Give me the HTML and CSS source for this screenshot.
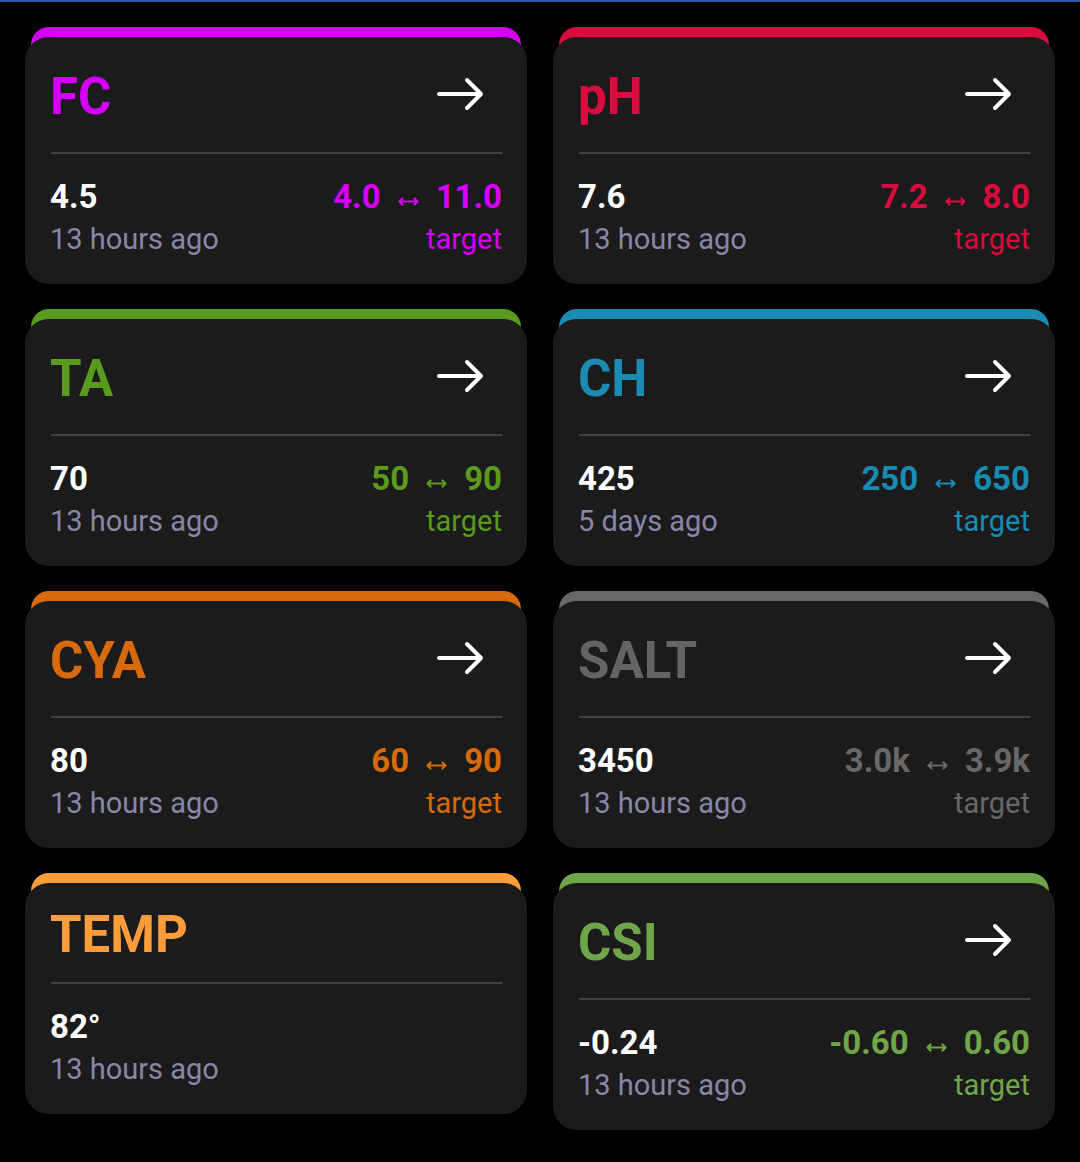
FILE: index.html
```html
<!DOCTYPE html>
<html>
<head>
<meta charset="utf-8">
<link rel="stylesheet" href="styles.css">
</head>
<body>
<div class="topline"></div>
<main class="grid">

  <section class="card c-fc">
    <div class="head"><h2 class="title">FC</h2><svg class="go" viewBox="0 0 50 34"><path d="M4 17H46M32 3L46 17L32 31"/></svg></div>
    <div class="rule"></div>
    <div class="stats">
      <div class="left"><div class="val">4.5</div><div class="when">13 hours ago</div></div>
      <div class="right"><div class="range"><span>4.0</span><svg class="lr" viewBox="0 0 21 9"><path d="M1.5 4.5H19.5M4.5 1.5L1.5 4.5L4.5 7.5M16.5 1.5L19.5 4.5L16.5 7.5"/></svg><span>11.0</span></div><div class="tgt">target</div></div>
    </div>
  </section>

  <section class="card c-ph">
    <div class="head"><h2 class="title">pH</h2><svg class="go" viewBox="0 0 50 34"><path d="M4 17H46M32 3L46 17L32 31"/></svg></div>
    <div class="rule"></div>
    <div class="stats">
      <div class="left"><div class="val">7.6</div><div class="when">13 hours ago</div></div>
      <div class="right"><div class="range"><span>7.2</span><svg class="lr" viewBox="0 0 21 9"><path d="M1.5 4.5H19.5M4.5 1.5L1.5 4.5L4.5 7.5M16.5 1.5L19.5 4.5L16.5 7.5"/></svg><span>8.0</span></div><div class="tgt">target</div></div>
    </div>
  </section>

  <section class="card c-ta">
    <div class="head"><h2 class="title">TA</h2><svg class="go" viewBox="0 0 50 34"><path d="M4 17H46M32 3L46 17L32 31"/></svg></div>
    <div class="rule"></div>
    <div class="stats">
      <div class="left"><div class="val">70</div><div class="when">13 hours ago</div></div>
      <div class="right"><div class="range"><span>50</span><svg class="lr" viewBox="0 0 21 9"><path d="M1.5 4.5H19.5M4.5 1.5L1.5 4.5L4.5 7.5M16.5 1.5L19.5 4.5L16.5 7.5"/></svg><span>90</span></div><div class="tgt">target</div></div>
    </div>
  </section>

  <section class="card c-ch">
    <div class="head"><h2 class="title">CH</h2><svg class="go" viewBox="0 0 50 34"><path d="M4 17H46M32 3L46 17L32 31"/></svg></div>
    <div class="rule"></div>
    <div class="stats">
      <div class="left"><div class="val">425</div><div class="when">5 days ago</div></div>
      <div class="right"><div class="range"><span>250</span><svg class="lr" viewBox="0 0 21 9"><path d="M1.5 4.5H19.5M4.5 1.5L1.5 4.5L4.5 7.5M16.5 1.5L19.5 4.5L16.5 7.5"/></svg><span>650</span></div><div class="tgt">target</div></div>
    </div>
  </section>

  <section class="card c-cya">
    <div class="head"><h2 class="title">CYA</h2><svg class="go" viewBox="0 0 50 34"><path d="M4 17H46M32 3L46 17L32 31"/></svg></div>
    <div class="rule"></div>
    <div class="stats">
      <div class="left"><div class="val">80</div><div class="when">13 hours ago</div></div>
      <div class="right"><div class="range"><span>60</span><svg class="lr" viewBox="0 0 21 9"><path d="M1.5 4.5H19.5M4.5 1.5L1.5 4.5L4.5 7.5M16.5 1.5L19.5 4.5L16.5 7.5"/></svg><span>90</span></div><div class="tgt">target</div></div>
    </div>
  </section>

  <section class="card c-salt">
    <div class="head"><h2 class="title">SALT</h2><svg class="go" viewBox="0 0 50 34"><path d="M4 17H46M32 3L46 17L32 31"/></svg></div>
    <div class="rule"></div>
    <div class="stats">
      <div class="left"><div class="val">3450</div><div class="when">13 hours ago</div></div>
      <div class="right"><div class="range"><span>3.0k</span><svg class="lr" viewBox="0 0 21 9"><path d="M1.5 4.5H19.5M4.5 1.5L1.5 4.5L4.5 7.5M16.5 1.5L19.5 4.5L16.5 7.5"/></svg><span>3.9k</span></div><div class="tgt">target</div></div>
    </div>
  </section>

  <section class="card c-temp">
    <div class="head"><h2 class="title">TEMP</h2></div>
    <div class="rule"></div>
    <div class="stats">
      <div class="left"><div class="val">82°</div><div class="when">13 hours ago</div></div>
    </div>
  </section>

  <section class="card c-csi">
    <div class="head"><h2 class="title">CSI</h2><svg class="go" viewBox="0 0 50 34"><path d="M4 17H46M32 3L46 17L32 31"/></svg></div>
    <div class="rule"></div>
    <div class="stats">
      <div class="left"><div class="val">-0.24</div><div class="when">13 hours ago</div></div>
      <div class="right"><div class="range"><span>-0.60</span><svg class="lr" viewBox="0 0 21 9"><path d="M1.5 4.5H19.5M4.5 1.5L1.5 4.5L4.5 7.5M16.5 1.5L19.5 4.5L16.5 7.5"/></svg><span>0.60</span></div><div class="tgt">target</div></div>
    </div>
  </section>

</main>
</body>
</html>
```

FILE: styles.css
```css
* { box-sizing: border-box; }

html, body {
  margin: 0;
  padding: 0;
  background: #000;
}

body {
  width: 1080px;
  height: 1162px;
  overflow: hidden;
  font-family: Roboto, "Liberation Sans", sans-serif;
  color: #fff;
}

.topline {
  height: 2px;
  background: #2b5a9c;
}

.grid {
  display: grid;
  grid-template-columns: 502px 502px;
  column-gap: 26px;
  row-gap: 35px;
  padding: 35px 25px 0 25px;
  align-items: start;
}

.card {
  --accent: #fff;
  background: #1b1b1b;
  border-radius: 24px;
  box-shadow: 0 -16px 0 -6px var(--accent);
  padding: 22px 25px 23px 25px;
  color: var(--accent);
}

.c-fc   { --accent: #d500f9; }
.c-ph   { --accent: #d80c3d; }
.c-ta   { --accent: #5a9a1c; }
.c-ch   { --accent: #1a8bb2; }
.c-cya  { --accent: #d66a0c; }
.c-salt { --accent: #686868; }
.c-temp { --accent: #fd9d3a; }
.c-csi  { --accent: #70a64a; }

.c-salt .title { color: #646464; }

.head {
  display: flex;
  align-items: center;
  justify-content: space-between;
  min-height: 60px;
}

.card .head:has(.go) { min-height: 76px; }

.title {
  margin: 0;
  font-size: 51px;
  line-height: 60px;
  font-weight: 700;
  color: var(--accent);
}

.go {
  width: 50px;
  height: 34px;
  margin-right: 17px;
  margin-bottom: 6px;
  fill: none;
  stroke: #fff;
  stroke-width: 4;
  stroke-linecap: round;
  stroke-linejoin: round;
}

.rule {
  height: 2px;
  background: #414141;
  margin: 17px 0 0 1px;
}

.stats {
  display: flex;
  justify-content: space-between;
  margin-top: 22px;
}

.left, .right {
  display: flex;
  flex-direction: column;
}

.right { align-items: flex-end; }

.val, .range {
  font-size: 33px;
  line-height: 41px;
  font-weight: 700;
  white-space: nowrap;
}

.val { color: #fff; }

.range {
  color: var(--accent);
  display: flex;
  align-items: center;
}

.lr {
  width: 21px;
  height: 9px;
  margin: 10px 17px 0 17px;
  fill: none;
  stroke: var(--accent);
  stroke-width: 2.2;
  stroke-linecap: round;
  stroke-linejoin: round;
}

.when, .tgt {
  font-size: 29px;
  line-height: 44px;
  font-weight: 400;
  white-space: nowrap;
}

.when { color: #8a86a8; }
.tgt { color: var(--accent); }
```
